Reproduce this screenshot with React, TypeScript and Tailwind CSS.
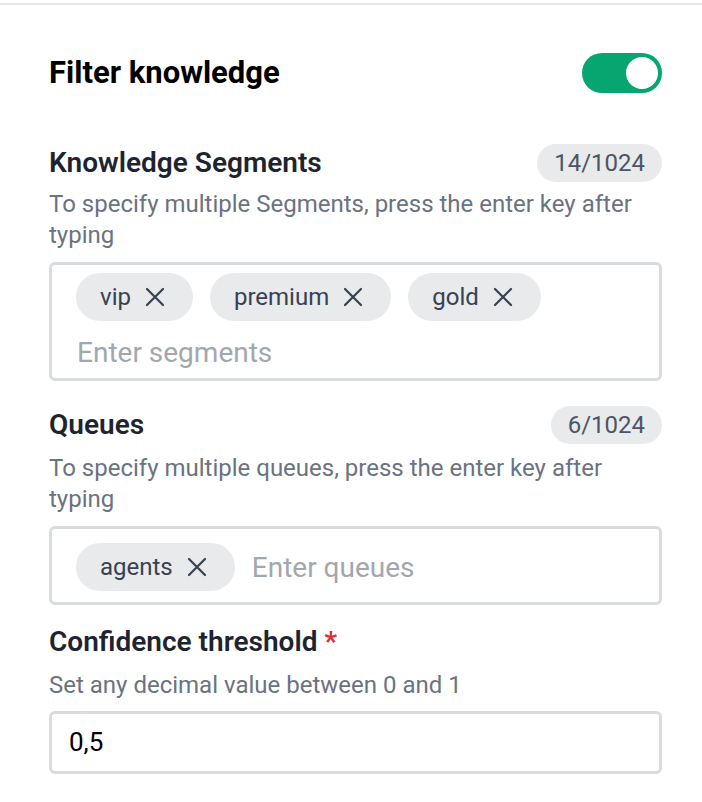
import React, { useState } from 'react';

const FONT = { fontFamily: 'Roboto, "Noto Sans", Arial, sans-serif' };

function XIcon() {
  return (
    <svg width="20" height="20" viewBox="0 0 20 20" fill="none" className="shrink-0">
      <path d="M2 2L18 18M18 2L2 18" stroke="#374151" strokeWidth="2.2" strokeLinecap="round" />
    </svg>
  );
}

function Chip({ label }: { label: string }) {
  return (
    <span className="inline-flex items-center h-[48px] pl-[24px] pr-[28px] gap-[14px] rounded-full bg-[#e9eaec] text-[24px] text-[#374151]">
      {label}
      <XIcon />
    </span>
  );
}

function Counter({ value }: { value: string }) {
  return (
    <span className="inline-flex items-center h-[38px] px-[17px] rounded-full bg-[#e9eaec] text-[24px] text-[#4b5563]">
      {value}
    </span>
  );
}

export default function App() {
  const [enabled, setEnabled] = useState(true);

  return (
    <div className="min-h-screen bg-white" style={FONT}>
      <div className="mt-[3px] h-[2px] bg-[#e8e9eb]" />
      <div className="pl-[49px] w-[662px]">
        {/* Header */}
        <div className="flex items-center justify-between mt-[48px]">
          <h1 className="text-[31px] font-bold text-black leading-[40px]">Filter knowledge</h1>
          <button
            onClick={() => setEnabled(!enabled)}
            className={`w-[80px] h-[40px] rounded-full p-[4px] flex ${enabled ? 'bg-[#07a56f] justify-end' : 'bg-gray-300 justify-start'}`}
          >
            <span className="w-[32px] h-[32px] rounded-full bg-white" />
          </button>
        </div>

        {/* Knowledge Segments */}
        <div className="flex items-center justify-between mt-[49px]">
          <label className="text-[28px] font-semibold text-[#1d2430]">Knowledge Segments</label>
          <Counter value="14/1024" />
        </div>
        <p className="mt-[5px] text-[24px] leading-[31px] text-[#6b7280]">
          To specify multiple Segments, press the enter key after typing
        </p>
        <div className="mt-[11px] border-[3px] border-[#d9dcdf] rounded-[6px] pl-[24px] pr-[16px] pt-[8px] pb-[5px] flex flex-wrap gap-x-[17px] gap-y-[12px]">
          <Chip label="vip" />
          <Chip label="premium" />
          <Chip label="gold" />
          <input
            className="basis-full h-[40px] outline-none text-[28px] pl-[1px] placeholder:text-[#a2a7ae]"
            placeholder="Enter segments"
          />
        </div>

        {/* Queues */}
        <div className="flex items-center justify-between mt-[23px]">
          <label className="text-[28px] font-semibold text-[#1d2430]">Queues</label>
          <Counter value="6/1024" />
        </div>
        <p className="mt-[7px] text-[24px] leading-[31px] text-[#6b7280]">
          To specify multiple queues, press the enter key after typing
        </p>
        <div className="mt-[11px] border-[3px] border-[#d9dcdf] rounded-[6px] pl-[24px] pr-[16px] pt-[14px] pb-[11px] flex flex-wrap items-center gap-x-[17px]">
          <Chip label="agents" />
          <input
            className="flex-1 min-w-0 h-[48px] outline-none text-[28px] placeholder:text-[#a2a7ae]"
            placeholder="Enter queues"
          />
        </div>

        {/* Confidence threshold */}
        <div className="mt-[18px] h-[38px] flex items-center">
          <label className="text-[28px] font-semibold text-[#1d2430]">
            Confidence threshold <span className="text-[#e02d2d]">*</span>
          </label>
        </div>
        <p className="mt-[9px] text-[24px] leading-[31px] text-[#6b7280]">
          Set any decimal value between 0 and 1
        </p>
        <div className="mt-[10px] border-[3px] border-[#d9dcdf] rounded-[6px] h-[63px] flex items-center pl-[17px]">
          <input className="w-full outline-none text-[26px] text-black" defaultValue="0,5" />
        </div>
      </div>
    </div>
  );
}
